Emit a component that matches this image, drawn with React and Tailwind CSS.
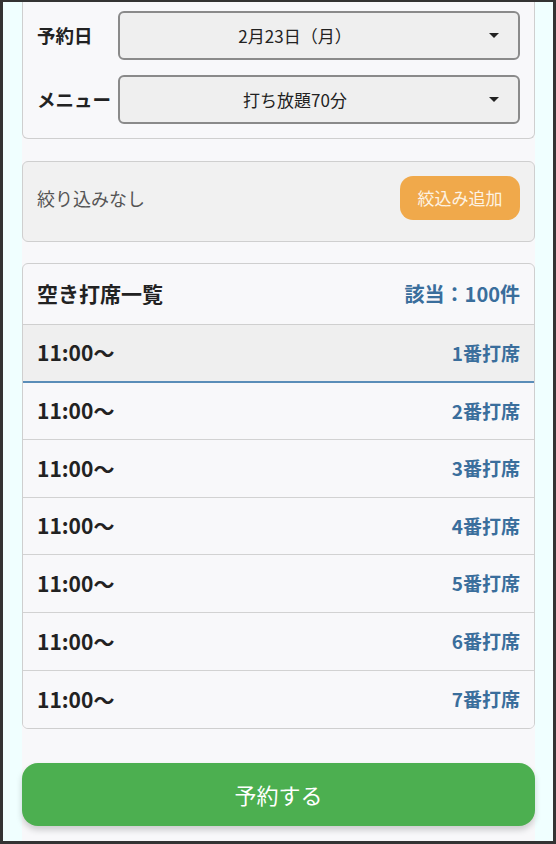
import { useState } from 'react';

const FONT = { fontFamily: '"Noto Sans CJK JP", "Noto Sans", sans-serif' };

const SEATS = [1, 2, 3, 4, 5, 6, 7];

function Caret() {
  return (
    <svg width="10" height="5" viewBox="0 0 10 5" className="shrink-0">
      <path d="M0 0H10L5 5Z" fill="#222" />
    </svg>
  );
}

function SelectBox({ value }) {
  return (
    <div className="flex-1 h-[49px] flex items-center rounded-[6px] border-2 border-[#8a8a8a] bg-[#efefef] pl-[8px] pr-[19px]">
      <span className="flex-1 text-center text-[17px] text-[#222] pr-[27px]">{value}</span>
      <Caret />
    </div>
  );
}

export default function App() {
  const [selected, setSelected] = useState(1);

  return (
    <div
      style={FONT}
      className="w-[556px] h-[844px] overflow-hidden border-[#333] border-x-[3px] border-b-[3px] border-t-2 bg-[#f0ffff]"
    >
      <div className="ml-[19px] mr-[18px] h-full bg-[#f8f8fa] flex flex-col">
        {/* Date / menu card (top cut off) */}
        <div className="rounded-b-[6px] border-x border-b border-[#cfcfcf] bg-[#f8f8fa] px-[14px] pt-[9px] pb-[14px] flex flex-col gap-[15px]">
          <div className="flex items-center">
            <span className="w-[81px] text-[18.5px] font-bold text-[#222]">予約日</span>
            <SelectBox value="2月23日（月）" />
          </div>
          <div className="flex items-center">
            <span className="w-[81px] text-[18.5px] font-bold text-[#222]">メニュー</span>
            <SelectBox value="打ち放題70分" />
          </div>
        </div>

        {/* Filter card */}
        <div className="mt-[22px] h-[81px] rounded-[6px] border border-[#cfcfcf] bg-[#f1f1f1] pl-[14px] pr-[14px] pt-[14px] flex items-start justify-between">
          <span className="h-[44px] flex items-center text-[18px] text-[#555]">絞り込みなし</span>
          <button className="h-[44px] w-[120px] rounded-[13px] bg-[#f0a94b] text-[17px] text-[#fdf3e4]">
            絞込み追加
          </button>
        </div>

        {/* Seat list card */}
        <div className="mt-[21px] rounded-[6px] border border-[#cfcfcf] bg-[#f8f8fa] overflow-hidden">
          <div className="h-[61px] flex items-center justify-between px-[14px] border-b border-[#cfcfcf]">
            <span className="text-[21px] font-bold text-[#222]">空き打席一覧</span>
            <span className="text-[20px] font-bold text-[#3a6e9c]">該当：100件</span>
          </div>
          {SEATS.map((n, i) => (
            <div
              key={n}
              onClick={() => setSelected(n)}
              className={`h-[57.6px] flex items-center justify-between px-[14px] cursor-pointer ${
                selected === n ? 'bg-[#efefef] border-b-2 border-[#5a8db8]' : 'bg-[#f8f8fa]'
              } ${selected !== n && i < SEATS.length - 1 ? 'border-b border-[#d2d2d2]' : ''}`}
            >
              <span className="text-[21px] font-bold text-[#222]">11:00〜</span>
              <span className="text-[19px] font-bold text-[#3a6e9c]">{n}番打席</span>
            </div>
          ))}
        </div>

        <button className="mt-[34px] h-[63px] rounded-[16px] bg-[#4caf50] text-[22px] text-white shadow-[0_4px_6px_rgba(0,0,0,0.18)]">
          予約する
        </button>
      </div>
    </div>
  );
}
